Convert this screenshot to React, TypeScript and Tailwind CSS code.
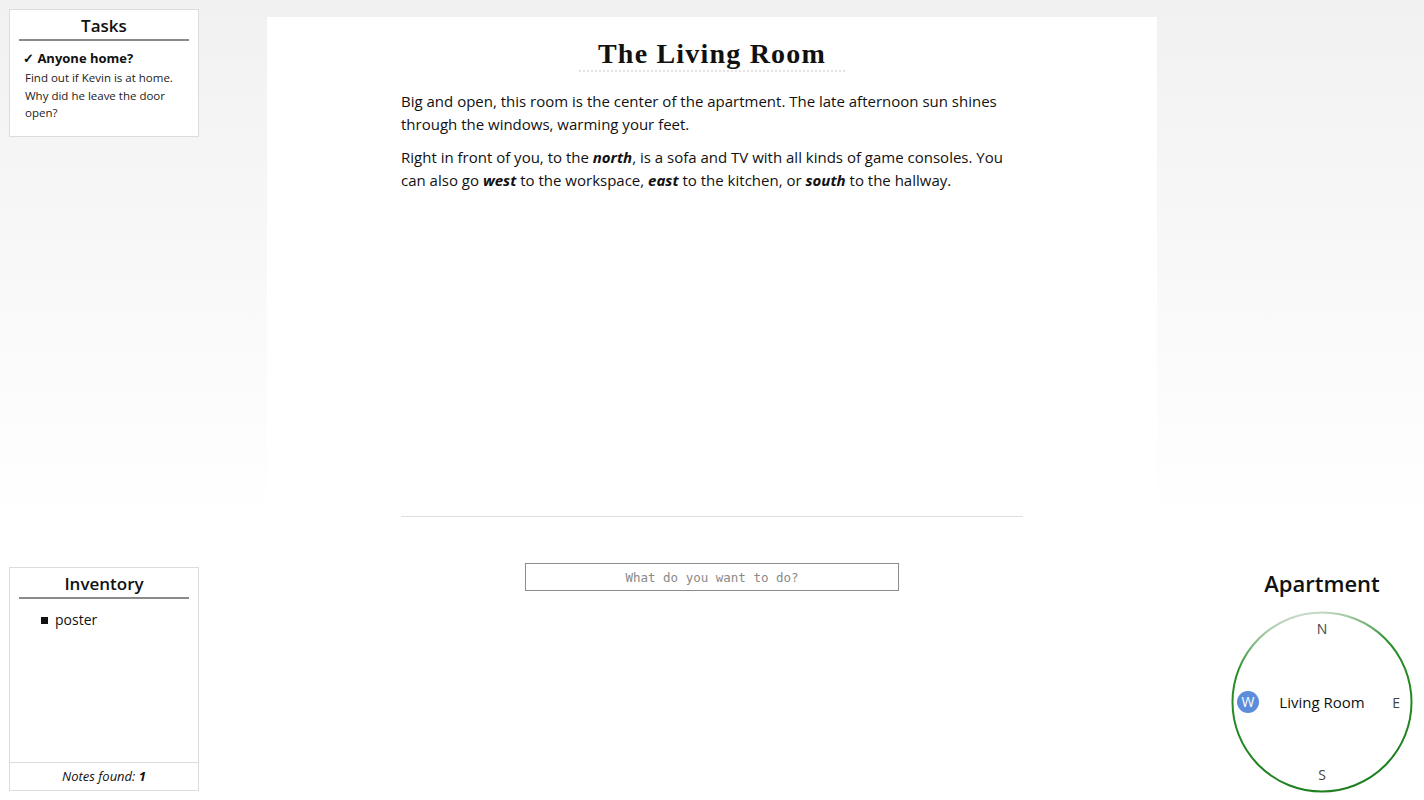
import React from "react";

const sans = { fontFamily: '"Open Sans", "Noto Sans", sans-serif' };

function Box({ title, children, className = "" }: { title: string; children: React.ReactNode; className?: string }) {
  return (
    <div className={`w-[190px] bg-white border border-[#dcdcdc] flex flex-col ${className}`}>
      <div className="px-[9px] pt-[4px]">
        <div className="text-center text-[17px] leading-[24px] font-semibold text-[#111] pb-[1px] border-b-2 border-[#8a8a8a]">
          {title}
        </div>
      </div>
      {children}
    </div>
  );
}

function Compass() {
  return (
    <div className="relative w-[182px] h-[182px]">
      <svg className="absolute inset-0" width="182" height="182" viewBox="0 0 182 182">
        <defs>
          <linearGradient id="ring" x1="0.2" y1="0" x2="0.4" y2="1">
            <stop offset="0%" stopColor="#e8e8e8" />
            <stop offset="28%" stopColor="#2a8f2a" />
            <stop offset="100%" stopColor="#1d7f1d" />
          </linearGradient>
        </defs>
        <circle cx="91" cy="91" r="89.5" fill="white" stroke="url(#ring)" strokeWidth="2" />
      </svg>
      <div className="absolute inset-0 flex flex-col items-center justify-between py-[8px] text-[14px] text-[#444]">
        <span className="leading-[20px]">N</span>
        <span className="leading-[20px]">S</span>
      </div>
      <div className="absolute inset-0 flex items-center justify-between pl-[6px] pr-[13px] text-[14px] text-[#444]">
        <span className="w-[22px] h-[22px] rounded-full bg-[#5b8ddb] text-white flex items-center justify-center text-[14px] leading-none">W</span>
        <span>E</span>
      </div>
      <div className="absolute inset-0 flex items-center justify-center">
        <span className="text-[15px] text-[#111]">Living Room</span>
      </div>
    </div>
  );
}

export default function App() {
  return (
    <div
      className="w-[1424px] h-[800px] overflow-hidden flex bg-linear-to-b from-[#f1f1f1] to-white to-65%"
      style={sans}
    >
      {/* Left column */}
      <div className="w-[267px] h-full flex flex-col justify-between pl-[9px] pt-[9px] pb-[9px]">
        <Box title="Tasks" className="h-[128px]">
          <div className="pl-[13px] pr-[8px] pt-[8px]">
            <div className="text-[13px] font-bold leading-[19px] text-[#111]">✓ Anyone home?</div>
            <div className="pl-[2px] mt-[1px] text-[11.5px] leading-[17.5px] text-[#222]">
              Find out if Kevin is at home. Why did he leave the door open?
            </div>
          </div>
        </Box>
        <Box title="Inventory" className="h-[224px]">
          <div className="flex-1 pt-[11px] pl-[31px]">
            <div className="flex items-center text-[14px] leading-[20px] text-[#111]">
              <span className="w-[7px] h-[7px] bg-[#111] mr-[7px] mt-[1px]" />
              poster
            </div>
          </div>
          <div className="border-t border-[#dcdcdc] h-[28px] flex items-center justify-center text-[13px] italic text-[#111]">
            Notes found:&nbsp;<b>1</b>
          </div>
        </Box>
      </div>

      {/* Main panel */}
      <div className="w-[890px] mt-[17px] bg-white flex flex-col items-center">
        <div className="pt-[20px]">
          <h1
            className="px-[19px] text-[28px] leading-[33px] font-bold tracking-[1.2px] text-[#111] border-b-2 border-dotted border-[#e2e2e2]"
            style={{ fontFamily: '"Liberation Serif", "Times New Roman", serif' }}
          >
            The Living Room
          </h1>
        </div>
        <div className="w-[622px] h-[444px] pt-[18px] text-[15px] leading-[23px] text-[#111]">
          <p className="mb-[10px]">
            Big and open, this room is the center of the apartment. The late afternoon sun shines through the windows, warming your feet.
          </p>
          <p>
            Right in front of you, to the <b><i>north</i></b>, is a sofa and TV with all kinds of game consoles. You can also go{" "}
            <b><i>west</i></b> to the workspace, <b><i>east</i></b> to the kitchen, or <b><i>south</i></b> to the hallway.
          </p>
        </div>
        <div className="w-[622px] border-t border-[#dedede]" />
        <input
          className="mt-[46px] w-[374px] h-[28px] border border-[#8c8c8c] bg-white text-center text-[12.5px] placeholder:text-[#8a8a8a] outline-none"
          style={{ fontFamily: '"DejaVu Sans Mono", "Liberation Mono", monospace' }}
          placeholder="What do you want to do?"
        />
      </div>

      {/* Right column */}
      <div className="flex-1 h-full flex flex-col justify-end items-end pr-[11px] pb-[7px]">
        <div className="flex flex-col items-center">
          <div className="text-[22px] leading-[30px] font-semibold text-[#111] mb-[13px]">Apartment</div>
          <Compass />
        </div>
      </div>
    </div>
  );
}
